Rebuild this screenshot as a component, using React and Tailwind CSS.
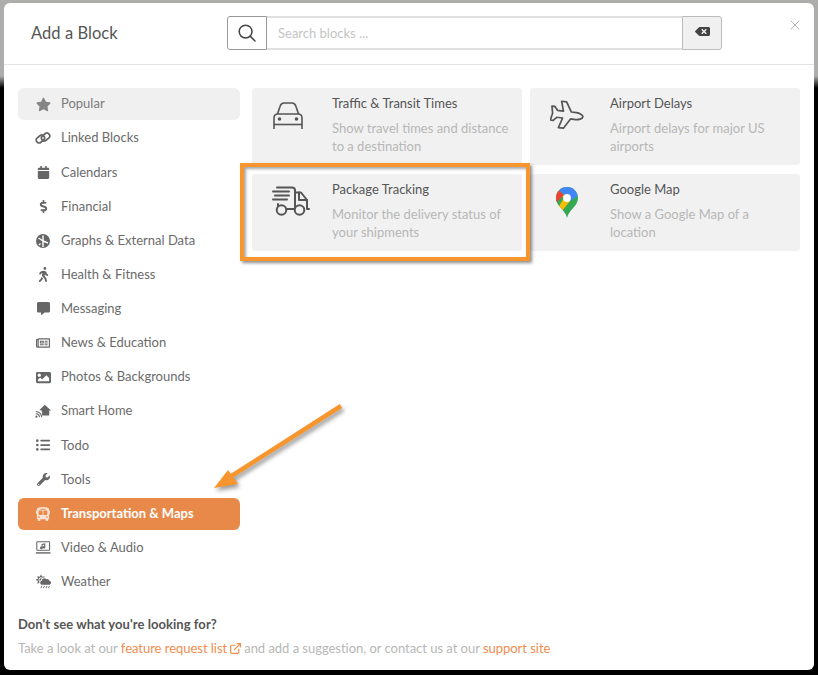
import {
  FaStar, FaCalendar, FaDollarSign, FaWalking, FaCommentAlt, FaRegNewspaper, FaImage,
  FaListUl, FaWrench, FaBusAlt, FaCloudSunRain, FaBackspace,
} from "react-icons/fa";
import { ExternalLink, X } from "lucide-react";

function SearchIcon() {
  return (
    <svg viewBox="0 0 18 18" className="w-[18px] h-[18px]" fill="none" stroke="#444" strokeWidth="1.5" strokeLinecap="round">
      <circle cx="7.6" cy="7.6" r="6.4" />
      <path d="M12.4 12.4 L17 17" />
    </svg>
  );
}

function LinkIcon() {
  return (
    <svg viewBox="0 0 16 14" className="w-[16px] h-[14px]" fill="none" stroke="currentColor" strokeWidth="1.7">
      <rect x="0.9" y="5.2" width="9" height="5.6" rx="2.8" transform="rotate(-40 5.4 8)" />
      <rect x="6.1" y="3.2" width="9" height="5.6" rx="2.8" transform="rotate(-40 10.6 6)" />
    </svg>
  );
}

function GraphIcon() {
  return (
    <svg viewBox="0 0 14 14" className="w-[14px] h-[14px]">
      <circle cx="7" cy="7" r="7" fill="currentColor" />
      <path d="M7 1.5 V7 M7 7 L7 13 M7 7 L2.5 4 M7 7 L12 9 M4.5 9.5 L3 11" stroke="#fff" strokeWidth="1.4" fill="none" />
    </svg>
  );
}

function SmartHomeIcon() {
  return (
    <svg viewBox="0 0 18 16" className="w-[18px] h-[16px]" fill="currentColor">
      <path d="M11 1 L18 7.5 H16 V13 H8 V9 C8 8 7 7 5 7 Z" />
      <path d="M1 8.5 a6.5 6.5 0 0 1 6.5 6.5 M1 11 a4 4 0 0 1 4 4" fill="none" stroke="currentColor" strokeWidth="1.2" />
      <circle cx="1.6" cy="14.4" r="1.2" />
    </svg>
  );
}

function VideoIcon() {
  return (
    <svg viewBox="0 0 18 15" className="w-[17px] h-[15px]" fill="none" stroke="currentColor" strokeWidth="1.2">
      <rect x="2" y="1" width="14.4" height="9.6" rx="0.8" />
      <path d="M1 13.6 H17.4" strokeWidth="1.6" />
      <path d="M8 8 V4 L11 3.4 V7" />
      <circle cx="7.2" cy="8" r="0.9" fill="currentColor" />
      <circle cx="10.2" cy="7.2" r="0.9" fill="currentColor" />
    </svg>
  );
}

function CarIcon() {
  return (
    <svg viewBox="0 0 30 27" className="w-[30px] h-[27px]" fill="none" stroke="#555" strokeWidth="1.6" strokeLinejoin="round">
      <path d="M4.5 12 L7 4.5 Q8 1 11 1 H19 Q22 1 23 4.5 L25.5 12" />
      <path d="M1 27 V16 Q1 12 5 12 H25 Q29 12 29 16 V27" />
      <path d="M1 22.5 H29" />
      <circle cx="6.5" cy="17" r="1" fill="#555" />
      <circle cx="23.5" cy="17" r="1" fill="#555" />
    </svg>
  );
}

function PlaneIcon() {
  return (
    <svg viewBox="0 0 35 31" className="w-[35px] h-[31px]" fill="none" stroke="#555" strokeWidth="1.7" strokeLinejoin="round">
      <g transform="rotate(7 17 15)">
        <path d="M33 15 c0-2 -4-3.5 -7-3.5 h-5 L15 2 h-5 l3 9.5 h-6 L4 8 H1 l1.5 7 -1.5 7 h3 l3-3.5 h6 l-3 10 h5 l6-10 h5 c3 0 7-1.5 7-3.5z" />
      </g>
    </svg>
  );
}

function TruckIcon() {
  return (
    <svg viewBox="0 0 38 30" className="w-[38px] h-[30px]" fill="none" stroke="#555" strokeWidth="2" strokeLinecap="round" strokeLinejoin="round">
      <path d="M5 1.5 H20 Q23 1.5 23 4.5 V22" />
      <path d="M23 6.5 H29 L35 14 V23 H37" />
      <path d="M27 6.5 V14 H35" />
      <path d="M1 5.5 H17 M3 9.5 H17 M1 13.5 H15" />
      <path d="M6 18 V20" />
      <circle cx="9.5" cy="24" r="4.8" />
      <circle cx="27.5" cy="24" r="4.8" />
      <path d="M14.5 23 H22.5" />
    </svg>
  );
}

function MapPinIcon() {
  return (
    <svg viewBox="0 0 22 31" className="w-[22px] h-[31px]">
      <defs>
        <clipPath id="pin">
          <path d="M11 0 C4.9 0 0 4.9 0 11 C0 15 2 17.6 4.5 20.6 C7 23.6 10 26.5 11 31 C12 26.5 15 23.6 17.5 20.6 C20 17.6 22 15 22 11 C22 4.9 17.1 0 11 0Z" />
        </clipPath>
      </defs>
      <g clipPath="url(#pin)">
        <rect width="22" height="31" fill="#34A853" />
        <path d="M0 4 L8 11 L0 24 L6 24 L14 14 L8 8 Z" fill="#FBBC04" />
        <path d="M0 0 H7 L3 3 L8 8 L0 16 Z" fill="#EA4335" />
        <path d="M4 0 H22 V9 L14 14 L8 8 L3 3 Z" fill="#4285F4" />
      </g>
      <circle cx="11" cy="11" r="3.9" fill="#fff" />
    </svg>
  );
}

const navItems = [
  { label: "Popular", icon: <FaStar size={15} />, hover: true },
  { label: "Linked Blocks", icon: <LinkIcon /> },
  { label: "Calendars", icon: <FaCalendar size={13} /> },
  { label: "Financial", icon: <FaDollarSign size={13} /> },
  { label: "Graphs & External Data", icon: <GraphIcon /> },
  { label: "Health & Fitness", icon: <FaWalking size={15} /> },
  { label: "Messaging", icon: <FaCommentAlt size={13} /> },
  { label: "News & Education", icon: <FaRegNewspaper size={14} /> },
  { label: "Photos & Backgrounds", icon: <FaImage size={15} /> },
  { label: "Smart Home", icon: <SmartHomeIcon /> },
  { label: "Todo", icon: <FaListUl size={14} /> },
  { label: "Tools", icon: <FaWrench size={13} /> },
  { label: "Transportation & Maps", icon: <FaBusAlt size={14} />, active: true },
  { label: "Video & Audio", icon: <VideoIcon /> },
  { label: "Weather", icon: <FaCloudSunRain size={15} /> },
];

const cards = [
  { title: "Traffic & Transit Times", desc: "Show travel times and distance to a destination", icon: <CarIcon />, iconBox: "pr-[9px] pt-[2px]" },
  { title: "Airport Delays", desc: "Airport delays for major US airports", icon: <PlaneIcon />, iconBox: "pr-[6px]" },
  { title: "Package Tracking", desc: "Monitor the delivery status of your shipments", icon: <TruckIcon />, iconBox: "pr-[2px]" },
  { title: "Google Map", desc: "Show a Google Map of a location", icon: <MapPinIcon />, iconBox: "pr-[6px] pt-[1px]" },
];

export default function App() {
  return (
    <div className="relative w-[818px] h-[675px] overflow-hidden pt-[3px] pl-[4px] font-['Lato',sans-serif] bg-[linear-gradient(to_bottom,#adadab_0,#adadab_76px,#000_88px)]">
      <div className="relative w-[810px] h-[667px] bg-white rounded-[6px] flex flex-col">
        {/* Header */}
        <div className="relative h-[62px] shrink-0 border-b border-[#e3e3e3] flex items-center pl-[27px] pb-[1px]">
          <h1 className="w-[196px] text-[16.5px] tracking-[0.05px] text-[#555]">Add a Block</h1>
          <div className="flex w-[495px] h-[34px]">
            <div className="w-[40px] flex items-center justify-center border border-[#999] rounded-l-[3px]">
              <SearchIcon />
            </div>
            <div className="flex-1 flex items-center pl-[11px] pt-[1px] border-y-2 border-[#e0e0e0] text-[13px] text-[#c4c4c4]">
              Search blocks ...
            </div>
            <div className="w-[40px] flex items-center justify-center bg-[#f0f0f0] border border-[#bbb] rounded-r-[3px] text-[#444]">
              <FaBackspace size={15} className="-mt-[3px]" />
            </div>
          </div>
          <X size={16} strokeWidth={1.5} className="absolute right-[11px] top-[14px] text-[#b5b5b5]" />
        </div>

        {/* Body */}
        <div className="flex-1 flex pl-[14px] pr-[14px] pt-[23px]">
          <div className="w-[222px] shrink-0 flex flex-col gap-[2.14px]">
            {navItems.map((item) => (
              <div
                key={item.label}
                className={`h-[32px] flex items-center pl-[17px] gap-[10px] rounded-[6px] text-[13px] ${
                  item.active
                    ? "bg-[#e8894a] text-white font-bold"
                    : item.hover
                      ? "bg-[#f0f0f0] text-[#7b7b7b]"
                      : "text-[#6b6b6b]"
                }`}
              >
                <span
                  className={`w-[16px] flex justify-center ${
                    item.active ? "text-white/75" : item.hover ? "text-[#858585]" : "text-[#666]"
                  }`}
                >
                  {item.icon}
                </span>
                {item.label}
              </div>
            ))}
          </div>

          <div className="ml-[12px] w-[548px] grid grid-cols-2 gap-x-[8px] gap-y-[9px] content-start">
            {cards.map((card) => (
              <div key={card.title} className="h-[77px] flex bg-[#f1f1f1] rounded-[3px] pt-[12px]">
                <div className={`w-[80px] shrink-0 flex justify-center items-start ${card.iconBox}`}>{card.icon}</div>
                <div className="flex-1 pr-[10px]">
                  <div className="text-[13px] leading-[18px] text-[#555] -mt-[6px]">{card.title}</div>
                  <div className="mt-[7px] text-[13px] leading-[18px] text-[#b7b7b7]">{card.desc}</div>
                </div>
              </div>
            ))}
          </div>
        </div>

        {/* Footer */}
        <div className="px-[14px] pb-[13px] text-[13px] leading-[18px]">
          <div className="font-bold text-[#555] tracking-[0.05px]">Don't see what you're looking for?</div>
          <div className="mt-[6px] flex items-center text-[#b7b7b7] tracking-[-0.03px]">
            Take a look at our&nbsp;
            <span className="text-[#ef8d4f]">feature request list</span>
            <ExternalLink size={13} strokeWidth={2.2} className="text-[#ef8d4f] mx-[2px]" />
            and add a suggestion, or contact us at our&nbsp;
            <span className="text-[#ef8d4f]">support site</span>
          </div>
        </div>
      </div>

      {/* Annotations */}
      <div className="absolute left-[240px] top-[163px] w-[290px] h-[98px] border-[4px] border-[#f7962f] shadow-[2px_2px_3px_rgba(0,0,0,0.45),inset_2px_2px_3px_rgba(0,0,0,0.35)]" />
      <svg className="absolute left-[205px] top-[395px] w-[145px] h-[105px] drop-shadow-[2px_3px_2px_rgba(0,0,0,0.4)]" viewBox="205 395 145 105">
        <path d="M341 406 L230 477" stroke="#f7962f" strokeWidth="4.5" />
        <path d="M214 488 L228 470 L238 484 Z" fill="#f7962f" />
      </svg>
    </div>
  );
}
